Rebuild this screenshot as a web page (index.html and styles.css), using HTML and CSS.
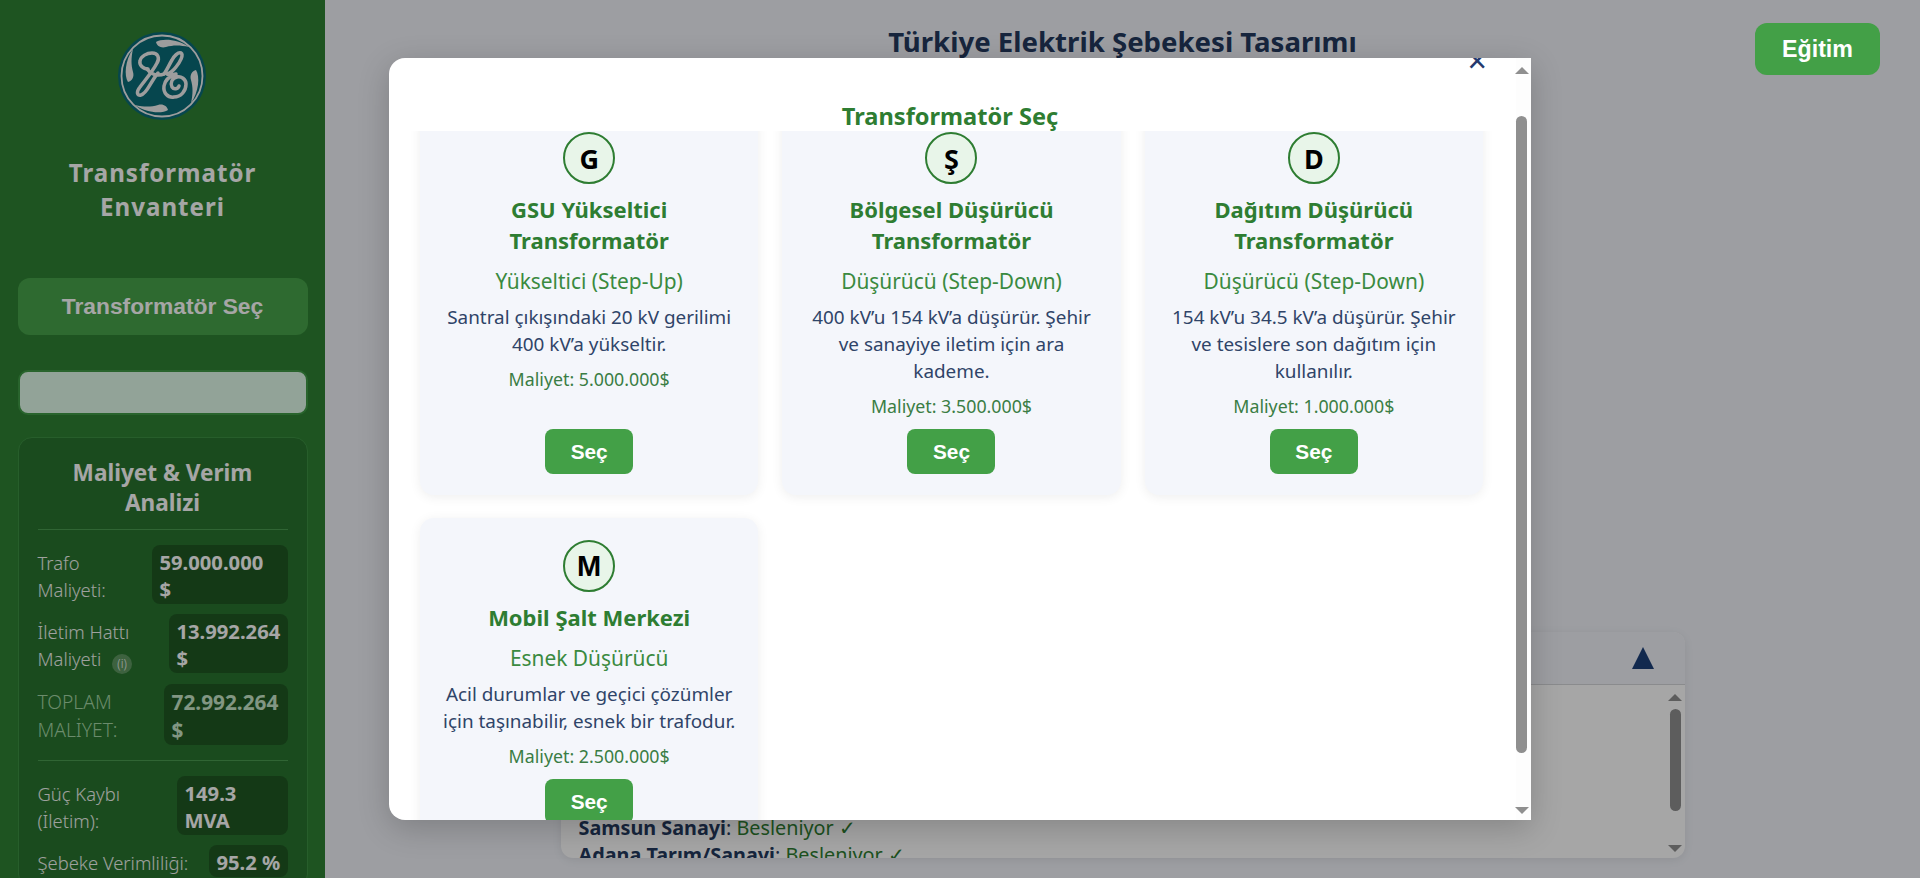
FILE: index.html
```html
<!DOCTYPE html>
<html lang="tr">
<head>
<meta charset="utf-8">
<title>Türkiye Elektrik Şebekesi Tasarımı</title>
<link rel="stylesheet" href="styles.css">
</head>
<body>
<aside class="sidebar">
  <svg class="logo" viewBox="0 0 88 88" aria-hidden="true">
    <circle cx="44" cy="44" r="44" fill="#0a6c78"/>
    <circle class="ring" cx="44" cy="44" r="40.5"/>
    <path class="swirl" d="M38 10C44 6 60 7 71 15C62 13 55 13 48 15C43 16.500 39 14 38 10Z"/>
    <path class="swirl" d="M38 10C44 6 60 7 71 15C62 13 55 13 48 15C43 16.500 39 14 38 10Z" transform="rotate(90 44 44)"/>
    <path class="swirl" d="M38 10C44 6 60 7 71 15C62 13 55 13 48 15C43 16.500 39 14 38 10Z" transform="rotate(180 44 44)"/>
    <path class="swirl" d="M38 10C44 6 60 7 71 15C62 13 55 13 48 15C43 16.500 39 14 38 10Z" transform="rotate(270 44 44)"/>
    <g class="mono">
      <path d="M30 37C25 37 21 33 22 29C23 24 29 21 34 21C40 21 42 26 39 31C35 39 28 47 22 55C18 60 19 64 23 63C28 62 31 54 35 48C37 45 38 43 40 41"/>
      <path d="M29 37C32 41 36 43 40 43C42 43 44 43 46 42"/>
      <path d="M46 42C49 38 51 33 54 28C56 24 60 20 63 21C66 23 62 30 58 35C55 39 52 41 49 42C52 43 55 43 58 42C52 44 47 48 46 54C45 61 50 66 56 65C63 65 68 59 68 52C68 47 63 44 59 45C54 46 52 51 54 55C56 58 60 57 61 54"/>
    </g>
  </svg>
  <h1 class="brand">Transformatör<br>Envanteri</h1>
  <button class="select-btn" type="button">Transformatör Seç</button>
  <div class="blank-input"></div>
  <section class="analysis">
    <h2 class="analysis-title">Maliyet &amp; Verim Analizi</h2>
    <div class="row">
      <span class="label">Trafo<br>Maliyeti:</span>
      <span class="value w136">59.000.000<br>$</span>
    </div>
    <div class="row">
      <span class="label">İletim Hattı<br>Maliyeti <i class="info">(i)</i></span>
      <span class="value w119">13.992.264<br>$</span>
    </div>
    <div class="row total">
      <span class="label">TOPLAM<br>MALİYET:</span>
      <span class="value w124">72.992.264<br>$</span>
    </div>
    <div class="rule"></div>
    <div class="row">
      <span class="label">Güç Kaybı<br>(İletim):</span>
      <span class="value w111">149.3<br>MVA</span>
    </div>
    <div class="row">
      <span class="label">Şebeke Verimliliği:</span>
      <span class="value w79">95.2 %</span>
    </div>
  </section>
</aside>

<main class="main">
  <h1 class="page-title">Türkiye Elektrik Şebekesi Tasarımı</h1>
  <section class="status">
    <div class="status-head"><span class="tri"></span></div>
    <div class="status-body">
      <ul class="status-list">
        <li><b>Samsun Sanayi</b>: <span class="ok">Besleniyor ✓</span></li>
        <li><b>Adana Tarım/Sanayi</b>: <span class="ok">Besleniyor ✓</span></li>
      </ul>
      <div class="scrollbar back-bar">
        <span class="arrow up"></span>
        <span class="thumb"></span>
        <span class="arrow down"></span>
      </div>
    </div>
  </section>
</main>

<button class="train-btn" type="button">Eğitim</button>

<div class="overlay">
  <div class="modal">
    <div class="modal-main">
      <header class="modal-head">
        <span class="close">×</span>
        <h2 class="modal-title">Transformatör Seç</h2>
      </header>
      <div class="cards-view">
        <div class="cards">
          <article class="card">
            <div class="badge">G</div>
            <h3 class="card-title">GSU Yükseltici<br>Transformatör</h3>
            <div class="card-type">Yükseltici (Step-Up)</div>
            <p class="card-desc">Santral çıkışındaki 20 kV gerilimi<br>400 kV’a yükseltir.</p>
            <div class="card-cost">Maliyet: 5.000.000$</div>
            <button class="pick" type="button">Seç</button>
          </article>
          <article class="card">
            <div class="badge">Ş</div>
            <h3 class="card-title">Bölgesel Düşürücü<br>Transformatör</h3>
            <div class="card-type">Düşürücü (Step-Down)</div>
            <p class="card-desc">400 kV’u 154 kV’a düşürür. Şehir<br>ve sanayiye iletim için ara<br>kademe.</p>
            <div class="card-cost">Maliyet: 3.500.000$</div>
            <button class="pick" type="button">Seç</button>
          </article>
          <article class="card">
            <div class="badge">D</div>
            <h3 class="card-title">Dağıtım Düşürücü<br>Transformatör</h3>
            <div class="card-type">Düşürücü (Step-Down)</div>
            <p class="card-desc">154 kV’u 34.5 kV’a düşürür. Şehir<br>ve tesislere son dağıtım için<br>kullanılır.</p>
            <div class="card-cost">Maliyet: 1.000.000$</div>
            <button class="pick" type="button">Seç</button>
          </article>
          <article class="card">
            <div class="badge badge-m">M</div>
            <h3 class="card-title">Mobil Şalt Merkezi</h3>
            <div class="card-type">Esnek Düşürücü</div>
            <p class="card-desc">Acil durumlar ve geçici çözümler<br>için taşınabilir, esnek bir trafodur.</p>
            <div class="card-cost">Maliyet: 2.500.000$</div>
            <button class="pick" type="button">Seç</button>
          </article>
        </div>
      </div>
    </div>
    <div class="scrollbar modal-bar">
      <span class="arrow up"></span>
      <span class="thumb"></span>
      <span class="arrow down"></span>
    </div>
  </div>
</div>
</body>
</html>
```

FILE: styles.css
```css
* { box-sizing: border-box; }
html, body { margin: 0; height: 100%; }
body {
  display: flex;
  height: 878px;
  overflow: hidden;
  background: #f1f3f9;
  font-family: "Noto Sans", "Open Sans", sans-serif;
  color: #243a5e;
  position: relative;
}
h1, h2, h3, p, ul { margin: 0; padding: 0; }
ul { list-style: none; }
button { border: 0; cursor: pointer; font-family: "Liberation Sans", Arial, sans-serif; font-weight: 700; }

/* sidebar */
.sidebar {
  width: 325px;
  flex: none;
  height: 878px;
  overflow: hidden;
  background: #2e8234;
  padding: 32px 18px 0;
  display: flex;
  flex-direction: column;
  align-items: center;
  color: #fff;
}
.logo { width: 88px; height: 88px; flex: none; margin-left: -1px; }
.ring { fill: none; stroke: #f2f2f2; stroke-width: 1.800; }
.swirl { fill: #f2f2f2; }
.mono { fill: none; stroke: #f2f2f2; stroke-width: 3.500; stroke-linecap: round; stroke-linejoin: round; }
.brand {
  margin-top: 36px;
  font-size: 24.1px;
  line-height: 34px;
  font-weight: 700;
  letter-spacing: 1px;
  text-align: center;
}
.select-btn {
  margin-top: 54px;
  width: 290px;
  height: 57px;
  flex: none;
  border-radius: 12px;
  background: #48a34a;
  color: #fff;
  font-size: 22.8px;
}
.blank-input {
  margin-top: 35px;
  width: 290px;
  height: 45px;
  flex: none;
  border-radius: 10px;
  border: 2px solid #3f9a45;
  background: #e1faea;
}
.analysis {
  margin-top: 22px;
  width: 290px;
  flex: none;
  padding: 20px 19px 0;
  border: 1px solid #3d9143;
  border-radius: 14px;
  background: rgba(0, 0, 0, .1);
}
.analysis-title {
  font-size: 22.6px;
  line-height: 30px;
  font-weight: 700;
  text-align: center;
  padding-bottom: 11px;
  border-bottom: 1px solid #4a9c50;
  margin-bottom: 15px;
}
.row {
  display: flex;
  justify-content: space-between;
  align-items: flex-start;
  margin-bottom: 10px;
  font-size: 20.200px;
  line-height: 27px;
}
.label { padding-top: 4px; color: #f3f7f3; font-size: 18.400px; font-weight: 300; white-space: nowrap; }
.value {
  flex: none;
  padding: 4px 8px 1px;
  border-radius: 8px;
  background: rgba(0, 0, 0, .24);
  font-weight: 700;
}
.w136 { width: 136px; }
.w119 { width: 119px; }
.w124 { width: 124px; }
.w111 { width: 111px; }
.w79 { width: 79px; white-space: nowrap; }
.total { font-size: 20.800px; line-height: 28px; margin-bottom: 15px; }
.total .label { color: #a5d6a7; font-size: 19.200px; }
.total .value { color: #c8e6c9; }
.rule { height: 1px; background: #4a9c50; margin-bottom: 15px; }
.info {
  display: inline-flex;
  align-items: center;
  justify-content: center;
  width: 20px;
  height: 20px;
  margin-left: 6px;
  border-radius: 50%;
  background: rgba(255, 255, 255, .25);
  font-size: 12px;
  font-style: normal;
  vertical-align: -2px;
}

/* page behind the dialog */
.main {
  flex: 1;
  min-width: 0;
  display: flex;
  flex-direction: column;
  align-items: center;
  padding: 20px 0 20px;
}
.page-title { font-size: 27.6px; line-height: 42px; font-weight: 700; }
.status {
  margin-top: auto;
  width: 1124px;
  height: 226px;
  border-radius: 12px;
  overflow: hidden;
  display: flex;
  flex-direction: column;
  background: #fff;
  box-shadow: 0 2px 10px rgba(0, 0, 0, .08);
}
.status-head {
  height: 53px;
  flex: none;
  display: flex;
  align-items: center;
  justify-content: flex-end;
  padding: 0 31px 0 0;
  background: #f1f3f9;
  border-bottom: 1px solid #d4d6d9;
}
.tri {
  width: 0;
  height: 0;
  border-left: 11px solid transparent;
  border-right: 11px solid transparent;
  border-bottom: 22px solid #1c3f78;
}
.status-body { flex: 1; min-height: 0; display: flex; }
.status-list {
  flex: 1;
  display: flex;
  flex-direction: column;
  justify-content: flex-end;
  padding-left: 18px;
  margin-bottom: -10px;
  font-size: 19.8px;
  line-height: 27px;
}
.status-list b { font-weight: 700; }
.ok { color: #2e7d32; }

.scrollbar { width: 15px; flex: none; display: flex; flex-direction: column; align-items: center; }
.arrow { width: 0; height: 0; border-left: 7px solid transparent; border-right: 7px solid transparent; }
.arrow.up { border-bottom: 7px solid #8f8f8f; }
.arrow.down { border-top: 7px solid #8f8f8f; }
.thumb { width: 11px; border-radius: 6px; background: #8f8f8f; }
.back-bar { margin-right: 2px; padding-top: 9px; }
.back-bar .thumb { height: 102px; margin-top: 8px; }
.back-bar .arrow.down { margin-top: 34px; }

.train-btn {
  position: absolute;
  top: 23px;
  right: 40px;
  z-index: 3;
  width: 125px;
  height: 52px;
  border-radius: 12px;
  background: #43a047;
  color: #fff;
  font-size: 23.2px;
}

/* dialog */
.overlay {
  position: absolute;
  inset: 0;
  z-index: 2;
  display: flex;
  align-items: center;
  justify-content: center;
  background: rgba(0, 0, 0, .35);
}
.modal {
  width: 1142px;
  height: 762px;
  display: flex;
  overflow: hidden;
  background: #fff;
  border-radius: 16px 0 0 16px;
  box-shadow: 0 8px 32px rgba(0, 0, 0, .2);
}
.modal-main { flex: 1; min-width: 0; display: flex; flex-direction: column; }
.modal-head {
  position: relative;
  height: 73px;
  flex: none;
  margin: 0 34px 0 29px;
  display: flex;
  align-items: flex-end;
  justify-content: center;
  background: #fff;
}
.close {
  position: absolute;
  top: -15px;
  right: -5px;
  font-size: 34px;
  line-height: 34px;
  color: #243a6e;
}
.modal-title { font-size: 23.6px; line-height: 30px; font-weight: 700; color: #2e7d32; }
.cards-view { flex: 1; min-height: 0; overflow: hidden; padding: 0 33px 0 31px; }
.cards {
  margin-top: -21px;
  display: grid;
  grid-template-columns: repeat(3, 1fr);
  column-gap: 24px;
  row-gap: 23px;
}
.card {
  display: flex;
  flex-direction: column;
  align-items: center;
  padding: 22px 16px 21px;
  border-radius: 14px;
  background: #f4f6fb;
  box-shadow: 0 2px 12px rgba(0, 0, 0, .07);
  text-align: center;
}
.badge {
  width: 52px;
  height: 52px;
  flex: none;
  display: flex;
  align-items: center;
  justify-content: center;
  border-radius: 50%;
  border: 2px solid #2e7d32;
  background: #e8f5e9;
  color: #000;
  font-size: 27px;
  font-weight: 700;
}
.badge-m { font-family: "Liberation Sans", Arial, sans-serif; font-size: 29px; }
.card-title { margin-top: 10px; font-size: 22px; line-height: 31px; font-weight: 700; color: #2e7d32; }
.card-type { margin-top: 11px; font-size: 20.9px; line-height: 28px; color: #3a8a40; }
.card-desc { margin-top: 9px; font-size: 18.9px; line-height: 27px; color: #2f4468; }
.card-cost { margin-top: 9px; margin-bottom: 10px; font-size: 17.8px; line-height: 25px; color: #3a7d44; }
.pick {
  margin-top: auto;
  width: 88px;
  height: 45px;
  flex: none;
  border-radius: 8px;
  background: #43a047;
  color: #fff;
  font-size: 20.8px;
}
.modal-bar { padding: 9px 4px 0 0; background: #fdfdfd; }
.modal-bar .thumb { height: 637px; margin-top: 42px; }
.modal-bar .arrow.down { margin-top: 54px; }
```
